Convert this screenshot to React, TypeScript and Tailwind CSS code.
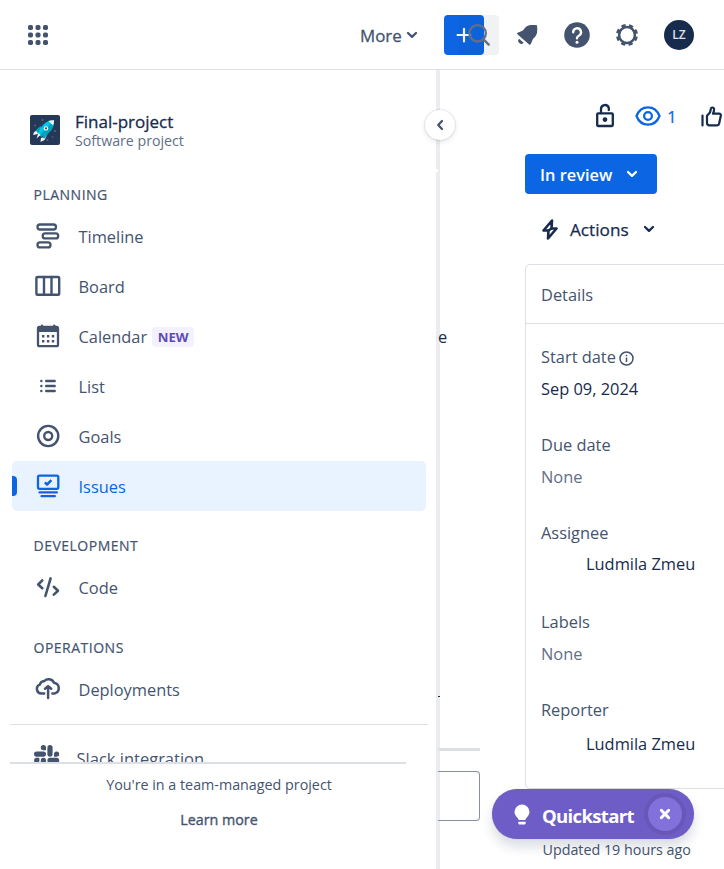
import type { ReactNode } from "react";

const Chevron = ({ className = "" }: { className?: string }) => (
  <svg width="12" height="8" viewBox="0 0 12 8" className={className} fill="none" stroke="currentColor" strokeWidth="2.3" strokeLinecap="round" strokeLinejoin="round">
    <path d="M2 2l4 3.8L10 2" />
  </svg>
);

const iconProps = {
  width: 30,
  height: 30,
  viewBox: "0 0 30 30",
  fill: "none",
  stroke: "currentColor",
  strokeWidth: 2.3,
  strokeLinecap: "round" as const,
  strokeLinejoin: "round" as const,
};

const TimelineIcon = () => (
  <svg {...iconProps}>
    <rect x="4.500" y="3.500" width="18.500" height="5" rx="2.500" />
    <rect x="9.700" y="12.400" width="15.500" height="5" rx="2.500" />
    <rect x="4.500" y="21.400" width="13" height="5" rx="2.500" />
  </svg>
);

const BoardIcon = () => (
  <svg {...iconProps} strokeWidth="2.4">
    <rect x="3.4" y="6" width="22.8" height="17.8" rx="1" />
    <path d="M11 6v17.8M18.500 6v17.8" />
  </svg>
);

const CalendarIcon = () => (
  <svg {...iconProps}>
    <rect x="5" y="6" width="20" height="19.2" rx="1.5" />
    <path d="M5 6h20v5H5z" fill="currentColor" stroke="none" />
    <path d="M9 4.600v3M21.3 4.600v3" />
    <path d="M9 14h2.4v2.4H9zM13.9 14h2.4v2.4h-2.4zM18.8 14h2.4v2.4h-2.400zM9 19h2.4v2.4H9zM13.9 19h2.4v2.4h-2.4zM18.8 19h2.4v2.4h-2.400z" fill="currentColor" stroke="none" />
  </svg>
);

const ListIcon = () => (
  <svg {...iconProps} strokeWidth="2.4">
    <path d="M8.3 10h.1M8.3 15h.1M8.3 20h.1M13.2 10h8.500M13.2 15h8.500M13.2 20h8.500" />
  </svg>
);

const GoalsIcon = () => (
  <svg {...iconProps} strokeWidth="2.4">
    <circle cx="15.2" cy="15" r="10.1" />
    <circle cx="15.2" cy="15" r="4" />
  </svg>
);

const IssuesIcon = () => (
  <svg {...iconProps}>
    <rect x="5" y="4.600" width="20.3" height="13.2" rx="1.5" />
    <path d="M11.900 11.300l2.200 2.200 4.300-4.300" strokeLinecap="butt" strokeWidth="2.500" />
    <path d="M6.500 21.400h17.400M8.500 25.2h13.400" strokeWidth="2.2" />
  </svg>
);

const CodeIcon = () => (
  <svg {...iconProps} strokeWidth="2.6">
    <path d="M9.3 8.400L5.2 12.500l4.1 3.700M17.6 6.400L12.4 24M20.8 14.800l4.2 4-4.2 3.800" />
  </svg>
);

const CloudIcon = () => (
  <svg {...iconProps} strokeWidth="2.5">
    <path d="M11.2 19.400H8.3a4.500 4.500 0 0 1-1.500-8.700 5 5 0 0 1 4.400-3.600 6 6 0 0 1 9.800 1.600 5.500 5.500 0 0 1 .9 10.700h-2.500" />
    <path d="M15.1 24V12.600M12 14.800l3.1-2.700 3.1 2.700" />
  </svg>
);

const SlackIcon = () => (
  <svg width="28" height="28" viewBox="0 0 28 28" fill="currentColor">
    <circle cx="10.4" cy="4.6" r="2.6" /><path d="M10.4 4.5h2.6v2.7h-2.6z" />
    <rect x="1" y="8.5" width="12" height="5.2" rx="2.6" />
    <rect x="14.4" y="2" width="5.2" height="11.7" rx="2.6" />
    <circle cx="23.6" cy="11" r="2.6" /><path d="M21 11h2.6v2.7H21z" />
    <circle cx="3.7" cy="17.4" r="2.6" /><path d="M3.7 14.8h2.6v2.6H3.7z" />
    <rect x="7.8" y="14.8" width="5.2" height="12" rx="2.6" />
    <rect x="14.4" y="14.8" width="11.8" height="5.2" rx="2.6" />
    <circle cx="17" cy="24" r="2.6" />
  </svg>
);

function NavItem({ icon, children, active = false }: { icon: ReactNode; children: ReactNode; active?: boolean }) {
  return (
    <div className={`ml-3 mr-2.5 flex h-[50px] shrink-0 items-center overflow-hidden rounded-[5px] ${active ? "bg-[#e9f2ff] text-[#0c66e4]" : "text-[#44546f]"}`}>
      <span className={`h-5 w-[5px] rounded-r-[4px] ${active ? "bg-[#0c66e4]" : ""}`} />
      <span className="ml-1 flex w-[57.5px] items-center pl-[12px]">{icon}</span>
      <span className="flex items-center pt-[3px] text-[16.4px]">{children}</span>
    </div>
  );
}

const SectionTitle = ({ children }: { children: ReactNode }) => (
  <h2 className="flex h-[34px] shrink-0 items-center pl-[33.5px] text-[14px] tracking-[0.5px] text-[#44546f] [-webkit-text-stroke:0.2px]">{children}</h2>
);

const Rocket = () => (
  <svg width="30" height="30" viewBox="0 0 30 30">
    <rect width="30" height="30" rx="2" fill="#253858" />
    <g fill="#5e6c84"><circle cx="12.5" cy="5" r=".9" /><circle cx="5" cy="10.5" r=".9" /><circle cx="25" cy="16" r=".9" /><circle cx="17.5" cy="25" r=".9" /><circle cx="22.5" cy="22" r=".8" /></g>
    <path d="M8.500 14L4 17.200 3 20l5-1zM17 20l-2.500 5-4 2 .5-4z" fill="#f4f5f7" />
    <path d="M5.700 15.2L10.5 11l2 4-4 4zM18.4 18.2L14.500 23.500 12 23l2-4z" fill="#00a3bf" />
    <path d="M24 5.2c-6-.2-10.5 3-13.5 8.200L7.500 19l3.500 2.600 6.600-3.200c4.3-3 6.8-7.8 6.4-13.2z" fill="#00c7e5" />
    <path d="M24 5.2L9.500 20.500l1.5 1.100 6.600-3.200c4.3-3 6.8-7.8 6.4-13.2z" fill="#00a3bf" />
    <path d="M24 5.2c-2.2-.1-4 .2-5.6.9l4.5 4.2c.9-1.6 1.2-3.2 1.1-5.1z" fill="#f4f5f7" />
    <path d="M8.500 18l-2 5.500 4-3.500z" fill="#fff" />
    <circle cx="16" cy="13.4" r="2.2" fill="#fff" /><circle cx="16" cy="13.4" r="1.1" fill="#42526e" />
  </svg>
);

function Header() {
  return (
    <header className="flex h-[70px] shrink-0 items-center border-b border-[#dcdfe4] pl-7 text-[#44546f]">
      <svg width="20" height="20" viewBox="0 0 20 20" fill="currentColor">
        {[0, 7.5, 15].map((y) => [0, 7.5, 15].map((x) => <rect key={`${x}-${y}`} x={x} y={y} width="5" height="5" rx="1.7" />))}
      </svg>
      <span className="ml-[312px] w-[46px] whitespace-nowrap pt-[2px] text-[16.9px] [-webkit-text-stroke:0.3px]">More</span>
      <Chevron />
      <div className="relative ml-[26px] h-10 w-[55px]">
        <div className="flex h-10 w-10 items-center rounded-[4px] bg-[#0c66e4] pl-3 text-white">
          <svg width="16" height="16" viewBox="0 0 16 16" stroke="currentColor" strokeWidth="2.2" strokeLinecap="round"><path d="M1.6 8h12.6M8 1.8v12.6" /></svg>
        </div>
        <div className="absolute left-[15px] top-0 flex h-10 w-10 items-center justify-center rounded-[4px] bg-[#091e42]/[0.06] text-[#626f86]">
          <svg width="24" height="24" viewBox="0 0 24 24" fill="none" stroke="currentColor" strokeWidth="2.4" strokeLinecap="round"><circle cx="10.6" cy="10.3" r="8.2" /><path d="M16.8 16.6l4.900 5" /></svg>
        </div>
      </div>
      <svg className="ml-[17px]" width="22" height="22" viewBox="0 0 22 22" fill="currentColor">
        <path d="M21 1.200c-2.500-.3-6.500-.4-8.500.2C10 2.200 8.300 4.500 7 6.500L1.700 8.800c-.9.400-.9 1 0 1.700l11.400 9.900c.7.600 1.300.4 1.700-.4l2.300-5.300c1.900-1.600 3.700-3.800 4-6.200.3-2.400.2-5-.1-7.300z" />
        <path d="M3 14.800l4.600 4a2.700 2.700 0 0 1-4.600-4z" />
      </svg>
      <svg className="ml-[26px]" width="26" height="26" viewBox="0 0 26 26">
        <circle cx="13" cy="13" r="12.8" fill="currentColor" />
        <path d="M9.2 10.300a3.9 3.9 0 1 1 5.9 3.2c-1.5.8-2.1 1.4-2.1 2.800" fill="none" stroke="white" strokeWidth="2.4" strokeLinecap="round" />
        <circle cx="13" cy="20.2" r="1.5" fill="white" />
      </svg>
      <svg className="ml-[24.5px] mr-[.5px]" width="24" height="24" viewBox="0 0 24 24" fill="none" stroke="currentColor">
        <circle cx="12" cy="12" r="7.900" strokeWidth="2.500" />
        <circle cx="12" cy="12" r="9.6" strokeWidth="2.800" strokeDasharray="4.2 3.34" strokeDashoffset="-1.67" />
      </svg>
      <span className="ml-[25px] flex h-[30px] w-[30px] items-center justify-center rounded-full bg-[#172b4d] text-[12px] font-semibold text-[#dfe2e8]">LZ</span>
    </header>
  );
}

function Sidebar() {
  return (
    <aside className="relative flex w-[440px] shrink-0 flex-col overflow-visible border-r-4 border-[#ebecf0]">
      <div className="flex h-[107px] shrink-0 items-start pl-[30px] pt-[45px]">
        <Rocket />
        <div className="ml-[15px] -mt-[4px]">
          <p className="text-[17px] leading-[21px] text-[#172b4d] [-webkit-text-stroke:0.3px]">Final-project</p>
          <p className="text-[14.2px] leading-[17px] text-[#626f86]">Software project</p>
        </div>
      </div>
      <SectionTitle>PLANNING</SectionTitle>
      <NavItem icon={<TimelineIcon />}>Timeline</NavItem>
      <NavItem icon={<BoardIcon />}>Board</NavItem>
      <NavItem icon={<CalendarIcon />}>
        Calendar
        <b className="ml-[5px] flex h-5 w-[42px] items-center justify-center rounded-[4px] bg-[#f3f0ff] pt-px text-[13.2px] text-[#5e4db2]">NEW</b>
      </NavItem>
      <NavItem icon={<ListIcon />}>List</NavItem>
      <NavItem icon={<GoalsIcon />}>Goals</NavItem>
      <NavItem icon={<IssuesIcon />} active>Issues</NavItem>
      <div className="h-[17px] shrink-0" />
      <SectionTitle>DEVELOPMENT</SectionTitle>
      <NavItem icon={<CodeIcon />}>Code</NavItem>
      <div className="h-[18px] shrink-0" />
      <SectionTitle>OPERATIONS</SectionTitle>
      <NavItem icon={<CloudIcon />}>Deployments</NavItem>
      <div className="ml-2.5 mr-2 mt-[10px] h-px shrink-0 bg-[#dcdfe4]" />
      <div className="flex h-[39px] shrink-0 items-start overflow-hidden pl-[33px] pt-[18px] text-[#44546f]">
        <SlackIcon />
        <span className="ml-[15.5px] mt-[4px] text-[16.5px] leading-6">Slack integration</span>
      </div>
      <div className="-mt-[2px] ml-2.5 h-[2px] w-[396px] shrink-0 bg-[#dcdfe4]" />
      <footer className="flex flex-col items-center pl-[2px] text-[14.3px] leading-5 text-[#44546f]">
        <p className="mt-[11px]">You're in a team-managed project</p>
        <p className="mt-[15px] [-webkit-text-stroke:0.35px]">Learn more</p>
      </footer>
      <span className="absolute -right-[2px] top-[99px] h-[3px] w-[2px] bg-white" />
      <button className="absolute -right-[19px] top-10 z-10 flex h-[30px] w-[30px] items-center justify-center rounded-full bg-white shadow-[0_0_0_1px_rgba(9,30,66,0.08),0_2px_4px_1px_rgba(9,30,66,0.08)]">
        <Chevron className="rotate-90 text-[#44546f]" />
      </button>
    </aside>
  );
}

function Field({ label, value, person = false, info = false, className }: { label: string; value: string; person?: boolean; info?: boolean; className: string }) {
  return (
    <div className={className}>
      <dt className="flex h-6 items-center text-[#44546f]">
        {label}
        {info && (
          <svg className="ml-[3px] mt-[2px]" width="15" height="15" viewBox="0 0 15 15" fill="none" stroke="currentColor" strokeWidth="1.5"><circle cx="7.5" cy="7.5" r="6.5" /><path d="M7.5 6.5V11M7.5 3.7v1.6" /></svg>
        )}
      </dt>
      <dd className={`h-6 leading-6 ${person ? "pl-[45px]" : ""} ${value === "None" ? "text-[#626f86]" : "text-[#172b4d]"} ${label === "Assignee" ? "mt-[7px]" : label === "Reporter" ? "mt-[10px]" : "mt-[8px]"}`}>{value}</dd>
    </div>
  );
}

export default function App() {
  return (
    <div className="relative flex h-[869px] w-[724px] flex-col overflow-hidden bg-white font-['Open_Sans',sans-serif] font-normal">
      <Header />
      <div className="flex min-h-0 flex-1">
        <Sidebar />
        <section className="relative -ml-[2px] w-[42px] shrink-0 overflow-hidden text-[16.4px] text-[#172b4d]">
          <div className="mt-[255px] h-6 leading-6">e</div>
          <div className="mt-[347px] h-px w-[2px] bg-[#172b4d]" />
          <div className="mt-[51px] h-[3px] bg-[#dcdfe4]" />
          <div className="mt-[20px] h-[50px] rounded-r-[4px] border border-l-0 border-[#8590a2]" />
        </section>
        <main className="ml-[45px] w-[230px] shrink-0 text-[16.4px]">
          <div className="flex h-[84px] items-start pt-[33px] text-[#172b4d]">
            <svg className="ml-[70px]" width="20" height="25" viewBox="0 0 20 25" fill="none" stroke="currentColor" strokeWidth="2.3" strokeLinejoin="round"><rect x="2.2" y="10.3" width="15.6" height="12.7" rx="1" /><path d="M6 10V6a4 4 0 0 1 7.8-1.2V7" strokeLinecap="round" /><circle cx="10" cy="16.6" r="1.8" fill="currentColor" strokeWidth="1.2" /></svg>
            <svg className="ml-[20px] mt-[3px] text-[#0c66e4]" width="26" height="20" viewBox="0 0 26 20" fill="none" stroke="currentColor" strokeWidth="2.3"><path d="M1.5 10C6-1.5 20-1.5 24.5 10 20 21.5 6 21.5 1.5 10z" /><circle cx="13" cy="10" r="3.9" /></svg>
            <span className="ml-[6px] mt-[2px] w-[10px] text-[17px] leading-6 text-[#0c66e4] [-webkit-text-stroke:0.2px]">1</span>
            <svg className="ml-[24px] mt-[3px]" width="21" height="21" viewBox="0 0 21 21" fill="none" stroke="currentColor" strokeWidth="2.2" strokeLinecap="round" strokeLinejoin="round"><path d="M1.5 9.5v10M6 9.8l3-3.2 1-4.3c.2-1.1 2.7-1.1 3 .4.3 1.4-.3 3.4-1 5h6.2c1.3 0 1.9 1 1.6 2.1l-1.7 7.9c-.2.9-.8 1.6-1.9 1.6H8.5C7 19.3 6 18.3 6 17z" /></svg>
          </div>
          <button className="flex h-10 w-[132px] items-center rounded-[4px] bg-[#0c66e4] pl-[15px] text-[16.4px] font-semibold text-white">
            <span className="w-[86px] whitespace-nowrap pt-[2px] text-left">In review</span>
            <Chevron />
          </button>
          <div className="mt-[23px] flex h-6 items-center pl-[17px] text-[#172b4d]">
            <svg width="16" height="21" viewBox="0 0 16 21" fill="none" stroke="currentColor" strokeWidth="2.6" strokeLinejoin="round"><path d="M10 1.5L1.5 11.5h5L6 19.5 14.5 9.5h-5z" /><path d="M6.5 11.5l3-2" /></svg>
            <span className="ml-[12px] w-[73px] pt-px text-[17.2px] [-webkit-text-stroke:0.25px]">Actions</span>
            <Chevron />
          </div>
          <dl className="mt-[23px] h-[525px] rounded-l-[5px] border border-[#dcdfe4]">
            <div className="flex h-[59px] items-center border-b border-[#dcdfe4] pl-[15px] pt-[2px] text-[#44546f]">Details</div>
            <div className="pl-[15px]">
              <Field className="pt-[21px]" label="Start date" value="Sep 09, 2024" info />
              <Field className="pt-[32px]" label="Due date" value="None" />
              <Field className="pt-[32px]" label="Assignee" value="Ludmila Zmeu" person />
              <Field className="pt-[34px]" label="Labels" value="None" />
              <Field className="pt-[32px]" label="Reporter" value="Ludmila Zmeu" person />
            </div>
          </dl>
          <p className="mt-[50px] pl-[17.5px] text-[14.3px] leading-[22px] text-[#44546f]">Updated 19 hours ago</p>
        </main>
      </div>
      <div className="absolute left-[492px] top-[789px] flex h-[50px] w-[202px] items-center rounded-full bg-[#6e5dc6] text-white shadow-[0_8px_12px_rgba(9,30,66,0.15),0_0_1px_rgba(9,30,66,0.3)]">
        <svg className="ml-[22px]" width="16" height="21" viewBox="0 0 16 21" fill="currentColor"><path d="M8 .5a7.5 7.5 0 0 1 7.5 7.5c0 3-2 4.5-3.3 6.3-.5.8-.5 1.7-1.2 1.7H5c-.7 0-.7-1-1.2-1.7C2.500 12.500.5 11 .5 8A7.500 7.500 0 0 1 8 .5zM4.300 17.800h7.400v1.200c0 .8-.6 1.500-1.500 1.500H5.800c-.8 0-1.500-.7-1.500-1.500z" /></svg>
        <span className="ml-[12px] w-[106px] pt-[4px] text-[18.6px] font-bold tracking-[-0.7px]">Quickstart</span>
        <span className="flex h-[34px] w-[34px] items-center justify-center rounded-full bg-[#8270db] shadow-[0_0_0_4px_#6957b8]">
          <svg width="12" height="12" viewBox="0 0 12 12" stroke="currentColor" strokeWidth="3" strokeLinecap="round"><path d="M2.300 2.300l7.400 7.400M9.700 2.300L2.300 9.700" /></svg>
        </span>
      </div>
    </div>
  );
}
